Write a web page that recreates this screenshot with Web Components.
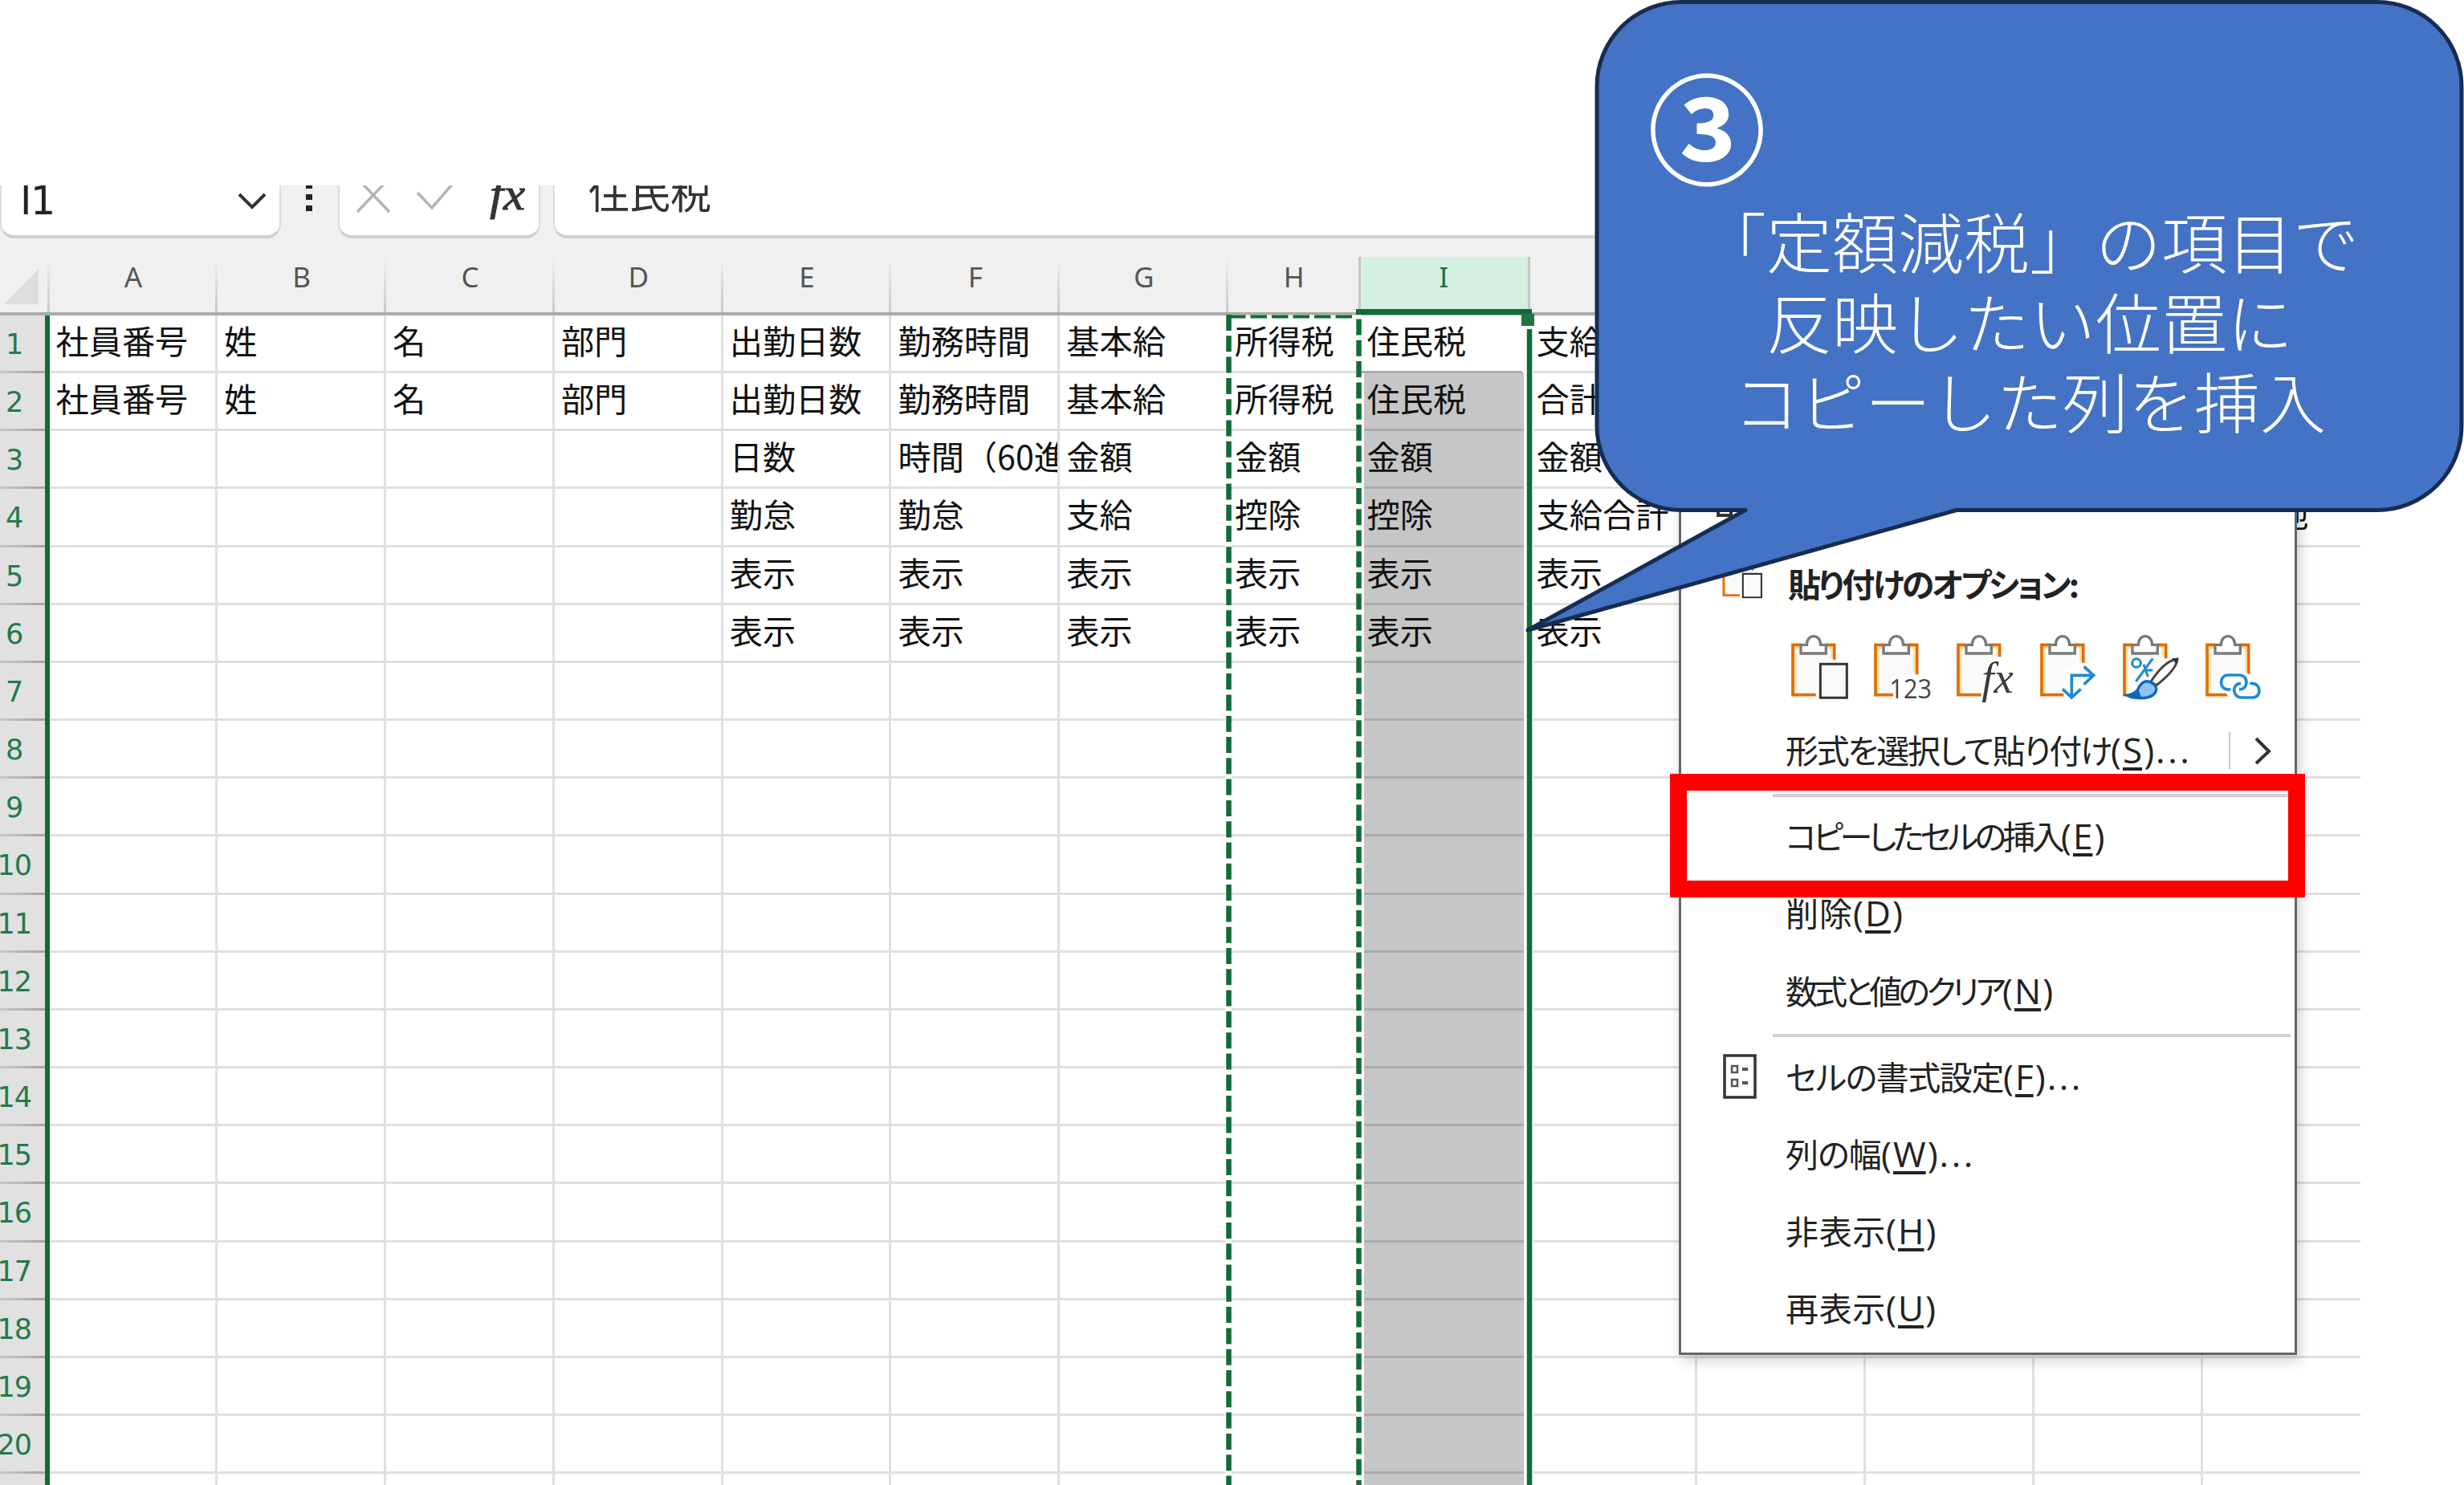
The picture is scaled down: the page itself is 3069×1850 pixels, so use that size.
<!DOCTYPE html>
<html lang="ja">
<head>
<meta charset="utf-8">
<title>定額減税 - 列の挿入</title>
<style>
	body {
		margin: 0;
		background: #fff;
		font-family: "Noto Sans CJK JP", "Open Sans", sans-serif;
	}
</style>
</head>
<body>
<sheet-stage>
	<formula-bar name="I1">住民税</formula-bar>
	<sheet-grid></sheet-grid>
	<context-menu slot="over">
		<menu-item icon="copy"></menu-item>
		<menu-item icon="paste" heading fit="360">貼り付けのオプション:</menu-item>
		<paste-options></paste-options>
		<menu-item key="S" more arrow fit="405">形式を選択して貼り付け</menu-item>
		<menu-rule></menu-rule>
		<menu-item key="E" fit="343">コピーしたセルの挿入</menu-item>
		<menu-item key="D" fit="84">削除</menu-item>
		<menu-item key="N" fit="270">数式と値のクリア</menu-item>
		<menu-rule></menu-rule>
		<menu-item key="F" more icon="format" fit="271">セルの書式設定</menu-item>
		<menu-item key="W" more fit="119">列の幅</menu-item>
		<menu-item key="H" fit="125">非表示</menu-item>
		<menu-item key="U" fit="125">再表示</menu-item>
	</context-menu>
	<focus-frame slot="over"></focus-frame>
	<call-out slot="over" number="③">「定額減税」の項目で<br>反映したい位置に<br>コピーした列を挿入</call-out>
</sheet-stage>

<script>
const CLIPBOARD = (edge) => `
	<path d="M12 42H158V222H12z" fill="#fafafa"/>
	<path d="M19 220V48H155V${edge - 8}" fill="none" stroke="#fbe2a0" stroke-width="8"/>
	<path d="M40 39H10V226H96M134 39H165V${edge}" fill="none" stroke="#e06c00" stroke-width="11"/>
	<path d="M40 39H62C62 -4 114 -4 114 39H134V71H40z" fill="#fff" stroke="#7a7a76" stroke-width="10"/>`;

const ICONS = {
	paste: `${CLIPBOARD(94)}
		<path d="M98 100H222V250H98z" fill="#fff"/>
		<path d="M113 111H212V237H113z" fill="#fafafa" stroke="#333" stroke-width="9"/>`,
	values: `${CLIPBOARD(150)}
		<path d="M76 158H216V244H76z" fill="#fff"/>
		<text x="62" y="240" font-family="Open Sans" font-size="100" textLength="158" lengthAdjust="spacingAndGlyphs" fill="#444">123</text>`,
	formulas: `${CLIPBOARD(84)}
		<path d="M98 244L120 100 210 92V244z" fill="#fff"/>
		<text x="98" y="217" font-family="Liberation Serif" font-style="italic" font-size="166" textLength="118" lengthAdjust="spacingAndGlyphs" fill="#3b3b3b">fx</text>`,
	transpose: `${CLIPBOARD(108)}
		<path d="M92 250V140L160 106H214V190L150 250z" fill="#fff"/>
		<path d="M122 236V153H206M168 120L204 153 168 187M88 204L122 236 156 204" fill="none" stroke="#1e8bd0" stroke-width="11"/>`,
	formatting: `${CLIPBOARD(90)}
		<path d="M20 250V205L100 165 180 80H220L160 250z" fill="#fff"/>
		<circle cx="55" cy="107" r="16" fill="none" stroke="#1e8bd0" stroke-width="9"/>
		<path d="M116 90L53 176M82 112L98 158M84 134H116" fill="none" stroke="#1e8bd0" stroke-width="9"/>
		<g transform="translate(-6)">
			<path d="M114 178Q165 98 214 92Q212 130 136 190z" fill="#fff" stroke="#444" stroke-width="9"/>
			<path d="M194 88L216 90 210 112z" fill="#333"/>
			<path d="M26 228Q64 222 72 194Q92 166 116 180Q140 192 134 212Q122 240 72 238Q44 238 26 228z" fill="#8fc3f0" stroke="#0f67bb" stroke-width="10"/>
			<path d="M26 228Q60 222 66 200L80 236Q44 240 26 228z" fill="#0f67bb"/>
		</g>`,
	link: `${CLIPBOARD(150)}
		<path d="M52 180L70 142H156L218 176V250H102z" fill="#fff"/>
		<path d="M98 206H88C54 206 54 152 88 152H130C166 152 166 206 130 206M170 183H176C214 183 214 236 180 236H140C102 236 102 183 136 183" fill="none" stroke="#1e8bd0" stroke-width="11"/>`,
};

const icon = (name, scale = 1) => `
	<svg width="${76 * scale}" height="${82 * scale}" viewBox="-2 -4 228 246">${ICONS[name]}</svg>`;

/** Base class: attaches an open root and fills it from render(). */
class SheetElement extends HTMLElement {
	connectedCallback() {
		if (this.shadowRoot) return;
		this.attachShadow({ mode: "open" }).innerHTML = this.render();
	}
}

/** Canvas of the page. The "over" slot takes the floating layers. */
class SheetStage extends SheetElement {
	render() {
		return `
			<style>
				:host {
					display: block;
					position: relative;
					width: 3069px;
					height: 1850px;
					overflow: hidden;
				}
				main {
					display: flex;
					flex-direction: column;
					width: 2940px;
					padding-top: 231px;
				}
			</style>
			<main><slot></slot></main>
			<slot name="over"></slot>
		`;
	}
}

/** Name box, edit buttons and the formula field, cut off at the top. */
class FormulaBar extends SheetElement {
	render() {
		return `
			<style>
				:host {
					display: flex;
					height: 89px;
					background: #f0f0f0;
					overflow: hidden;
				}
				div {
					display: flex;
					height: 66px;
					box-sizing: border-box;
					background: #fff;
					border: 2px solid #dcdcdc;
					border-bottom: 4px solid #cfcfcf;
					border-top: 0;
					border-radius: 0 0 18px 18px;
				}
				.name { width: 350px; justify-content: space-between; padding: 0 15px 0 23px; }
				.name span { font: 49px/49px "DejaVu Sans", sans-serif; margin-top: -5px; color: #222; letter-spacing: -1.500px; }
				.buttons { width: 252px; }
				.field { flex: 1; padding-left: 42px; }
				.field span { font-size: 51px; line-height: 60px; margin-top: -23px; color: #333; }
				svg { display: block; }
			</style>
			<div class="name">
				<span>${this.getAttribute("name")}</span>
				<svg width="38" height="60" fill="none" stroke="#333" stroke-width="4"><path d="M3 11L19 27 35 11"/></svg>
			</div>
			<svg width="71" height="65" fill="#222"><path d="M31 0h8v4h-8zM31 11h8v7h-8zM31 25h8v7h-8z"/></svg>
			<div class="buttons">
				<svg width="248" height="60" viewBox="423 231 248 60">
					<path d="M445 222L485 264M485 222L445 264M520 240L538 259 567 225" fill="none" stroke="#b4b4b4" stroke-width="3.5"/>
					<text x="610" y="261" font-family="Liberation Serif" font-style="italic" font-size="58" textLength="44" lengthAdjust="spacingAndGlyphs" fill="#333" stroke="#333">fx</text>
				</svg>
			</div>
			<svg width="16" height="65"></svg>
			<div class="field"><span><slot></slot></span></div>
		`;
	}
}

/** Letters stop at I: the call-out lies over the rest of the header. */
const COLUMNS = ["A", "B", "C", "D", "E", "F", "G", "H", "I", "", "", "", "", ""];
const WIDTHS = [209.8, 209.8, 209.8, 209.8, 209.8, 209.8, 209.8, 164.5, 211, 208.9, 209.8, 209.8, 209.8, 196.1];
const ROWS = [
	["社員番号", "姓", "名", "部門", "出勤日数", "勤務時間", "基本給", "所得税", "住民税", "支給"],
	["社員番号", "姓", "名", "部門", "出勤日数", "勤務時間", "基本給", "所得税", "住民税", "合計"],
	["", "", "", "", "日数", "時間（60進", "金額", "金額", "金額", "金額"],
	["", "", "", "", "勤怠", "勤怠", "支給", "控除", "控除", "支給合計", "", "", "", "その他"],
	["", "", "", "", "表示", "表示", "表示", "表示", "表示", "表示"],
	["", "", "", "", "表示", "表示", "表示", "表示", "表示", "表示"],
];
const ROW_COUNT = 21;
const SELECTED = "I";

/** Worksheet with column I selected and column H on the clipboard. */
class SheetGrid extends SheetElement {
	render() {
		const heads = COLUMNS.map((name) => `<b class="${name === SELECTED ? "on" : ""}">${name}</b>`).join("");
		let rows = "";
		for (let r = 0; r < ROW_COUNT; r++) {
			const cells = COLUMNS.map((name, c) => {
				let state = name === SELECTED ? (r ? "picked" : "active") : "";
				if (c === COLUMNS.length - 1) state = "last";
				return `<span class="${state}">${ROWS[r]?.[c] ?? ""}</span>`;
			}).join("");
			rows += `<i>${r < 20 ? r + 1 : ""}</i>${cells}`;
		}
		return `
			<style>
				:host { display: block; position: relative; height: 1530px; overflow: hidden; }
				.grid {
					display: grid;
					grid-template-columns: 61.5px ${WIDTHS.map((w) => w + "px").join(" ")};
					grid-template-rows: 72.9px;
					grid-auto-rows: 72.18px;
				}
				b, i, span, .corner { box-sizing: border-box; overflow: hidden; white-space: nowrap; }
				.corner, b {
					background: linear-gradient(#f0f0f000, #c8c8c8) right / 3px 100% no-repeat #f0f0f0;
					border-bottom: 4px solid #ababab;
				}
				b {
					font: 35px/50px "Noto Sans", sans-serif;
					text-align: center;
					color: #555;
					padding-right: 1px;
				}
				b.on {
					background: #d4f0e0;
					border-left: 3px solid #c6c6c6;
					border-right: 3px solid #c6c6c6;
					margin-left: -3px;
					color: #1e7145;
				}
				.corner svg { display: block; }
				i {
					font: 35px/73px "DejaVu Sans", sans-serif;
					display: flex;
					justify-content: center;
					padding-right: 20px;
					letter-spacing: -1px;
					color: #227a4b;
					background: linear-gradient(90deg, #c8c8c8, #a4a4a4) bottom / 100% 3px no-repeat #e1e1e1;
					border-right: 6px solid #106b37;
				}
				span {
					font-size: 41.2px;
					line-height: 60px;
					padding-left: 8px;
					color: #111;
					border-right: 3px solid #e0e0e0;
					border-bottom: 3px solid #e0e0e0;
				}
				.active { border-bottom-color: #ababab; border-right-color: #fff; margin-right: 7.6px; }
				.picked {
					background: #c6c6c6;
					border-bottom-color: #ababab;
					border-right: 0;
					margin: 0 7.6px 0 4.4px;
					padding-left: 3.6px;
				}
				.last { border-right: 0; }
				.marks { position: absolute; left: 0; top: 0; }
			</style>
			<div class="grid">
				<div class="corner"><svg width="60" height="69"><path d="M48 15V59H5z" fill="#dedede"/></svg></div>
				${heads}
				${rows}
			</div>
			<svg class="marks" width="2940" height="1530" viewBox="0 320 2940 1530" fill="none" stroke="#106b37">
				<path d="M1530 392.500V1850M1692.500 392.500V1850" stroke="#fff" stroke-width="7"/>
				<path d="M1530 394.500H1690" stroke="#fff" stroke-width="4"/>
				<path d="M1531 394.500H1690" stroke-width="4" stroke-dasharray="20.500 6"/>
				<path d="M1530.500 392V1850" stroke-width="6.500" stroke-dasharray="20 6.300"/>
				<path d="M1692.500 397.500V1850" stroke-width="6.500" stroke-dasharray="20 6.300"/>
				<path d="M1905 393V1850" stroke="#fff" stroke-width="9"/>
				<path d="M1689 388.500H1908" stroke-width="7"/>
				<path d="M1905 410V1850" stroke-width="6.500"/>
				<path d="M1895 391H1911V406H1895z" fill="#217346" stroke="none"/>
			</svg>
		`;
	}
}

/** Right-click menu panel. */
class ContextMenu extends SheetElement {
	render() {
		return `
			<style>
				:host {
					display: flex;
					flex-direction: column;
					position: absolute;
					left: 2091px;
					top: 581px;
					width: 770px;
					height: 1107px;
					box-sizing: border-box;
					background: #fff;
					border: 3px solid #666;
					box-shadow: 4px 6px 16px #0003;
				}
			</style>
			<slot></slot>
		`;
	}
}

/**
 * A menu row.
 * @attribute {string} key - Access key, drawn underlined in brackets.
 * @attribute {number} fit - Width the label is tracked to, in pixels.
 */
class MenuItem extends SheetElement {
	connectedCallback() {
		super.connectedCallback();
		const label = this.shadowRoot.querySelector(".label");
		const fit = Number(this.getAttribute("fit"));
		if (!fit) return;
		const extra = fit - label.getBoundingClientRect().width;
		label.style.letterSpacing = `${extra / this.textContent.length}px`;
	}

	render() {
		const key = this.getAttribute("key");
		const more = this.hasAttribute("more") ? `<span class="more">...</span>` : "";
		return `
			<style>
				:host {
					display: flex;
					align-items: center;
					flex: none;
					height: 96.200px;
					color: #222;
					white-space: nowrap;
				}
				.icon { width: 130px; height: 100%; display: flex; align-items: center; flex: none; }
				.icon svg { margin-left: 50px; overflow: visible; }
				.label {
					font-size: 41px;
					line-height: 60px;
					margin-top: -5px;
					font-feature-settings: "palt";
				}
				:host([heading]) .label { font-weight: bold; margin-left: 3px; }
				.key { font: 44px/60px "Open Sans", sans-serif; margin-top: -3px; letter-spacing: 2px; }
				.more { letter-spacing: 3.500px; }
				u { letter-spacing: 0; margin-right: 2px; text-decoration-thickness: 4px; text-underline-offset: 5px; }
				.arrow { margin-left: auto; margin-right: 28px; }
			</style>
			<span class="icon">${this.icon()}</span>
			<span class="label"><slot></slot></span>
			${key ? `<span class="key">(<u>${key}</u>)${more}</span>` : ""}
			${this.hasAttribute("arrow") ? `
				<svg class="arrow" width="56" height="46" fill="none">
					<path d="M3 0V46" stroke="#c8c8c8" stroke-width="2"/>
					<path d="M36 8L52 24 36 39" stroke="#333" stroke-width="4"/>
				</svg>` : ""}
		`;
	}

	icon() {
		switch (this.getAttribute("icon")) {
			case "paste":
				return `<span style="margin-top:-18px">${icon("paste", 0.7)}</span>`;
			case "copy":
				return `<svg width="48" height="60" fill="#fff" stroke="#333" stroke-width="4"><path d="M-4 2H12V40H-4z"/></svg>`;
			case "format":
				return `
					<svg width="46" height="56" fill="none" stroke="#333" style="margin-left:52px;margin-top:-2px">
						<path d="M2 2H40V54H2z" stroke-width="3.500"/>
						<path d="M11 15H18V23H11zM11 32H18V40H11z" stroke="#555" stroke-width="2.500"/>
						<path d="M24 19H31M24 36H31" stroke="#555" stroke-width="4"/>
					</svg>`;
			default:
				return "";
		}
	}
}

class MenuRule extends SheetElement {
	render() {
		return `
			<style>
				:host { display: block; flex: none; height: 4px; margin: 5px 5px 2px 114px; background: #d0d0d0; }
			</style>
		`;
	}
}

/** Row of the six paste buttons. */
class PasteOptions extends SheetElement {
	render() {
		const names = ["paste", "values", "formulas", "transpose", "formatting", "link"];
		return `
			<style>
				:host {
					display: flex;
					flex: none;
					gap: 27.200px;
					height: 111px;
					box-sizing: border-box;
					padding: 0 0 4px 135px;
					align-items: center;
				}
				svg { display: block; overflow: visible; }
			</style>
			${names.map((name) => icon(name)).join("")}
		`;
	}
}

/** Red frame around the command to choose. */
class FocusFrame extends SheetElement {
	render() {
		return `
			<style>
				:host {
					display: block;
					position: absolute;
					left: 2080px;
					top: 964px;
					width: 791px;
					height: 154px;
					box-sizing: border-box;
					border: 21px solid #f00;
				}
			</style>
		`;
	}
}

/** Speech bubble with a step number, its tail pointing at the column. */
class CallOut extends SheetElement {
	render() {
		return `
			<style>
				:host {
					display: block;
					position: absolute;
					left: 1890px;
					top: 0;
					width: 1179px;
					height: 800px;
					color: #fff;
				}
				svg { position: absolute; left: 0; top: 0; }
				.body { position: relative; margin-left: 97px; width: 1082px; }
				.number {
					height: 249px;
					padding: 70px 0 0 65px;
					box-sizing: border-box;
					font-size: 148px;
					line-height: 168px;
					font-weight: bold;
				}
				.text {
					font-size: 82px;
					line-height: 99.500px;
					font-weight: 300;
					text-align: center;
					white-space: nowrap;
					text-spacing-trim: space-all;
				}
			</style>
			<svg width="1179" height="800" viewBox="1890 0 1179 800">
				<path d="M2094 2.500H2961A105 105 0 0 1 3066 107.500V530.500A105 105 0 0 1 2961 635.500H2437L1903 785 2174 635.500H2094A105 105 0 0 1 1989 530.500V107.500A105 105 0 0 1 2094 2.500z" fill="#4472c4" stroke="#172c51" stroke-width="5" stroke-linejoin="round"/>
			</svg>
			<div class="body">
				<div class="number">${this.getAttribute("number")}</div>
				<div class="text"><slot></slot></div>
			</div>
		`;
	}
}

customElements.define("sheet-stage", SheetStage);
customElements.define("formula-bar", FormulaBar);
customElements.define("sheet-grid", SheetGrid);
customElements.define("context-menu", ContextMenu);
customElements.define("menu-item", MenuItem);
customElements.define("menu-rule", MenuRule);
customElements.define("paste-options", PasteOptions);
customElements.define("focus-frame", FocusFrame);
customElements.define("call-out", CallOut);
</script>
</body>
</html>
